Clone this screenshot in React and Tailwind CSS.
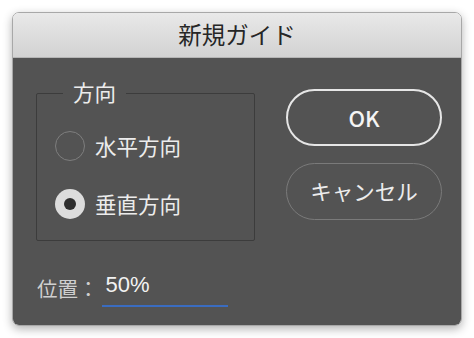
import React from 'react';

const font = { fontFamily: '"Noto Sans CJK JP", "Noto Sans", sans-serif' };
const latin = { fontFamily: '"Liberation Sans", "Noto Sans CJK JP", sans-serif' };

const Radio = ({ checked, label }) => (
  <div className="flex items-center gap-[10px]">
    {checked ? (
      <div className="w-[30px] h-[30px] rounded-full bg-[#dcdcdc] flex items-center justify-center">
        <div className="w-[12px] h-[12px] rounded-full bg-[#2e2e2e]" />
      </div>
    ) : (
      <div className="w-[30px] h-[30px] rounded-full border-[1.5px] border-[#7e7e7e]" />
    )}
    <span className="text-[21.5px] leading-none text-[#ececec]">{label}</span>
  </div>
);

const App = () => {
  return (
    <div className="w-[474px] h-[338px] bg-white p-[12px]" style={font}>
      <div className="w-[450px] rounded-t-[7px] rounded-b-[7px] overflow-hidden shadow-[0_3px_10px_rgba(0,0,0,0.3)] border border-[#a8a8a8]">
        <div className="h-[45px] bg-gradient-to-b from-[#e9e9e9] to-[#d2d2d2] border-b border-[#b5b5b5] flex items-center justify-center">
          <span className="text-[23.5px] text-[#262626] leading-none">新規ガイド</span>
        </div>
        <div className="h-[267px] bg-[#535353] pt-[31px] pl-[23px] pr-[19px]">
          <div className="flex justify-between items-start">
            <div className="relative mt-[4px] w-[219px] h-[148px] border-[1.5px] border-[#3c3c3c] rounded-[2px]">
              <span className="absolute -top-[13px] left-[26px] px-[10px] bg-[#535353] text-[21.5px] leading-none text-[#ececec]">方向</span>
              <div className="flex flex-col gap-[28px] pt-[37px] pl-[18px]">
                <Radio label="水平方向" />
                <Radio checked label="垂直方向" />
              </div>
            </div>
            <div className="flex flex-col gap-[17px]">
              <button className="w-[156px] h-[57px] rounded-full border-2 border-[#e6e6e6] text-[22px] font-medium text-[#f4f4f4]">OK</button>
              <button className="w-[156px] h-[57px] rounded-full border-[1.5px] border-[#7a7a7a] text-[21.5px] text-[#ececec]">キャンセル</button>
            </div>
          </div>
          <div className="flex items-end mt-[32px] pl-[1px]">
            <span className="text-[20.5px] leading-none text-[#cfcfcf] pb-[9px]">位置：</span>
            <div className="ml-[3px] w-[126px] border-b-2 border-[#3a6cc0] pb-[8px] pl-[4px]">
              <span className="text-[22px] leading-none text-[#f2f2f2]" style={latin}>50%</span>
            </div>
          </div>
        </div>
      </div>
    </div>
  );
};

export default App;
